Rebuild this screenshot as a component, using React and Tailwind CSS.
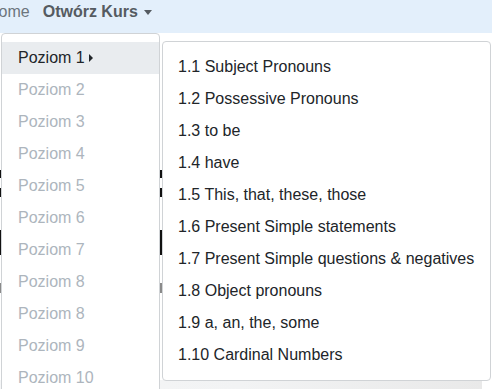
const levels = [
  'Poziom 2', 'Poziom 3', 'Poziom 4', 'Poziom 5', 'Poziom 6',
  'Poziom 7', 'Poziom 8', 'Poziom 8', 'Poziom 9', 'Poziom 10',
]

const lessons = [
  '1.1 Subject Pronouns',
  '1.2 Possessive Pronouns',
  '1.3 to be',
  '1.4 have',
  '1.5 This, that, these, those',
  '1.6 Present Simple statements',
  '1.7 Present Simple questions & negatives',
  '1.8 Object pronouns',
  '1.9 a, an, the, some',
  '1.10 Cardinal Numbers',
]

export default function App() {
  return (
    <div className="relative w-[492px] h-[389px] overflow-hidden bg-white text-[16px] text-[#212529]" style={{ fontFamily: '"Liberation Sans", Arial, sans-serif' }}>
      {/* Navbar */}
      <nav className="h-[33px] bg-[#e3effb] flex items-start leading-[24px]">
        <span className="ml-[-13px] text-[#6c757d]">Home</span>
        <span className="ml-[13px] font-bold text-[#555b61] flex items-center">
          Otwórz Kurs
          <span className="ml-[6px] w-0 h-0 border-l-[4px] border-r-[4px] border-t-[5px] border-l-transparent border-r-transparent border-t-[#555b61]" />
        </span>
      </nav>

      {/* Page content under the menus */}
      <div className="pt-[137px]">
        <div className="w-[300px] h-[8px] bg-[#111]" />
        <div className="w-[300px] h-[9px] mt-[10px] bg-[#111]" />
        <div className="w-[300px] h-[25px] mt-[33px] bg-[#111]" />
        <div className="w-[300px] h-[10px] mt-[28px] bg-[#8a8a8a]" />
        <div className="h-[10px] mt-[87px] bg-gradient-to-r from-[#f5f6f7] via-[#f2f3f4] to-[#e9e9e9] mr-[10px]" />
      </div>

      {/* Level dropdown */}
      <div className="absolute left-[1px] top-[33px] w-[159px] h-[400px] bg-white border border-[#d0d3d6] rounded-[4px] pt-[8px]">
        <div className="h-[32px] bg-[#e9ecef] flex items-center pl-[16px]">
          Poziom 1
          <span className="ml-[4px] w-0 h-0 border-t-[4px] border-b-[4px] border-l-[4px] border-t-transparent border-b-transparent border-l-[#212529]" />
        </div>
        {levels.map((l, i) => (
          <div key={i} className="h-[32px] flex items-center pl-[16px] text-[#adb5bd]">
            {l}
          </div>
        ))}
      </div>

      {/* Lessons submenu */}
      <div className="absolute left-[162px] top-[41px] w-[329px] h-[340px] bg-white border border-[#d0d3d6] rounded-[4px] pt-[9px]">
        {lessons.map((l) => (
          <div key={l} className="h-[32px] flex items-center pl-[15px] whitespace-nowrap">
            {l}
          </div>
        ))}
      </div>
    </div>
  )
}
